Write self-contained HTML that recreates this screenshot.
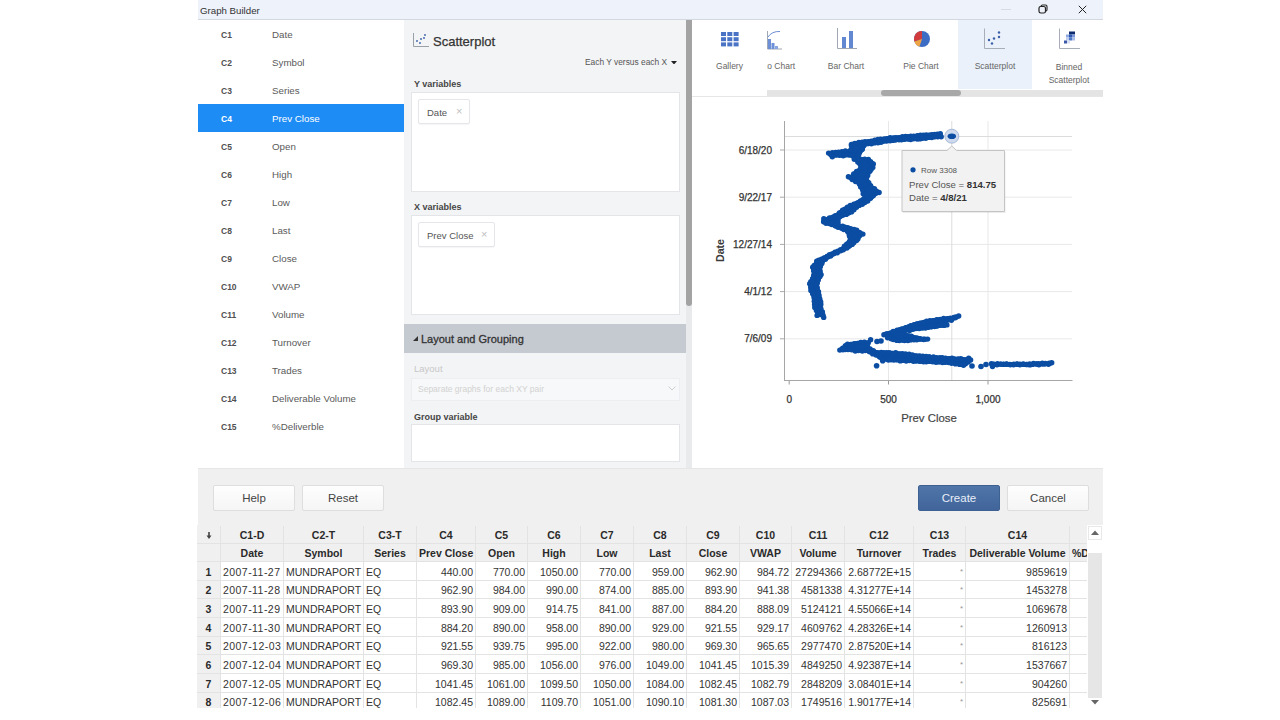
<!DOCTYPE html>
<html><head><meta charset="utf-8"><style>
html,body{margin:0;padding:0;width:1280px;height:720px;overflow:hidden;background:#fff;}
body{font-family:"Liberation Sans",sans-serif;position:relative;color:#333;}
.a{position:absolute;white-space:nowrap;}
#title{left:198px;top:0;width:905px;height:19px;background:#eef2fb;border-bottom:1px solid #d3d8de;}
#cols{left:198px;top:20px;width:206px;height:448px;background:#fff;}
.crow{position:absolute;left:0;width:206px;height:28px;}
.cn{position:absolute;left:23px;top:10px;font-size:8.5px;font-weight:bold;color:#505050;}
.nm{position:absolute;left:74px;top:9px;font-size:9.75px;color:#5a5a5a;}
.sel{background:#1e8cf5;}
.sel .cn,.sel .nm{color:#fff;}
#mid{left:404px;top:20px;width:288px;height:448px;background:#f3f4f6;}
.box{position:absolute;background:#fff;border:1px solid #e3e5e9;box-sizing:border-box;}
.lbl{position:absolute;font-size:9px;font-weight:bold;color:#454545;margin-top:1px;}
.chip{position:absolute;background:#fff;border:1px solid #e4e6ea;border-radius:2px;box-shadow:0 1px 1px rgba(0,0,0,0.04);height:25px;box-sizing:border-box;}
.chip span{position:absolute;top:7px;font-size:9.5px;color:#555;}
.chip i{position:absolute;top:5px;font-style:normal;font-size:11px;color:#c0c0c0;}
#right{left:692px;top:20px;width:411px;height:448px;background:#fff;}
#bottom{left:198px;top:468px;width:905px;height:57px;background:#f0f0f0;box-shadow:inset 0 1px 0 #e6e6e6;}
.btn{position:absolute;height:26px;box-sizing:border-box;background:linear-gradient(#fefefe,#f5f5f5);border:1px solid #dedede;border-radius:2px;font-size:11.5px;color:#444;text-align:center;line-height:24px;}
.btn.pri{background:linear-gradient(#4f75a9,#41659a);border-color:#3d6193;color:#e8eef8;}
.ct{position:absolute;font-size:8.5px;color:#666;text-align:center;margin-top:1px;}
#tbl{left:197px;top:525px;width:906px;height:183px;background:#f0f0f0;overflow:hidden;}
.tc{position:absolute;box-sizing:border-box;border-right:1px solid #e3e3e3;border-bottom:1px solid #e3e3e3;font-size:10.5px;color:#333;overflow:hidden;padding:0 2px;line-height:18px;}
.th{background:#f0f0f0;font-weight:bold;text-align:center;color:#2a2a2a;}
.rh{background:#f0f0f0;font-weight:bold;text-align:center;color:#2a2a2a;}
.num{text-align:right;}
.dt{letter-spacing:0.45px;}
.tc{background:#fff;}
.th,.rh{background:#f0f0f0 !important;}
.dt,.num,.rh,.tx{padding-top:0.5px !important;}
</style></head><body>
<div id="title" class="a"><span class="a" style="left:2px;top:5px;font-size:9.7px;color:#333;">Graph Builder</span><span class="a" style="left:803px;top:9px;width:10px;height:1px;background:#d8dce2;"></span><svg class="a" style="left:840px;top:4px" width="10" height="10" viewBox="0 0 10 10"><rect x="1" y="2.5" width="6.5" height="6.5" rx="1.8" fill="none" stroke="#222" stroke-width="1.2"/><path d="M3 2.2 Q3.2 1 4.5 1 H7.5 Q9 1 9 2.5 V5.5 Q9 7 8 7" fill="none" stroke="#222" stroke-width="1.1"/></svg><svg class="a" style="left:880px;top:5px" width="9" height="9" viewBox="0 0 9 9"><path d="M0.8 0.8 L8.2 8.2 M8.2 0.8 L0.8 8.2" stroke="#222" stroke-width="1"/></svg></div>
<div id="cols" class="a">
<div class="crow" style="top:0px"><span class="cn">C1</span><span class="nm">Date</span></div>
<div class="crow" style="top:28px"><span class="cn">C2</span><span class="nm">Symbol</span></div>
<div class="crow" style="top:56px"><span class="cn">C3</span><span class="nm">Series</span></div>
<div class="crow sel" style="top:84px"><span class="cn">C4</span><span class="nm">Prev Close</span></div>
<div class="crow" style="top:112px"><span class="cn">C5</span><span class="nm">Open</span></div>
<div class="crow" style="top:140px"><span class="cn">C6</span><span class="nm">High</span></div>
<div class="crow" style="top:168px"><span class="cn">C7</span><span class="nm">Low</span></div>
<div class="crow" style="top:196px"><span class="cn">C8</span><span class="nm">Last</span></div>
<div class="crow" style="top:224px"><span class="cn">C9</span><span class="nm">Close</span></div>
<div class="crow" style="top:252px"><span class="cn">C10</span><span class="nm">VWAP</span></div>
<div class="crow" style="top:280px"><span class="cn">C11</span><span class="nm">Volume</span></div>
<div class="crow" style="top:308px"><span class="cn">C12</span><span class="nm">Turnover</span></div>
<div class="crow" style="top:336px"><span class="cn">C13</span><span class="nm">Trades</span></div>
<div class="crow" style="top:364px"><span class="cn">C14</span><span class="nm">Deliverable Volume</span></div>
<div class="crow" style="top:392px"><span class="cn">C15</span><span class="nm">%Deliverble</span></div>
</div>
<div id="mid" class="a">
<svg class="a" style="left:9px;top:13px" width="16" height="14" viewBox="0 0 16 14"><path d="M0.5 0 V13.5 H16" fill="none" stroke="#9aa0a8" stroke-width="1"/><circle cx="4" cy="8" r="0.9" fill="#3a5fa8"/><circle cx="7" cy="10" r="0.9" fill="#3a5fa8"/><circle cx="8" cy="6" r="0.9" fill="#3a5fa8"/><circle cx="11" cy="5" r="0.9" fill="#3a5fa8"/><circle cx="12" cy="2" r="0.9" fill="#3a5fa8"/></svg>
<span class="a" style="left:29px;top:14px;font-size:13px;color:#333;-webkit-text-stroke:0.25px #333;">Scatterplot</span>
<span class="a" style="left:181px;top:37px;font-size:8.4px;color:#555;">Each Y versus each X</span>
<svg class="a" style="left:267px;top:40.5px" width="6" height="3.5" viewBox="0 0 6 3.5"><path d="M0 0 H6 L3 3.5 Z" fill="#222"/></svg>
<span class="lbl" style="left:10px;top:58px;">Y variables</span>
<div class="box" style="left:7px;top:72px;width:269px;height:100px;"></div>
<div class="chip" style="left:14px;top:79px;width:52px;"><span style="left:8px">Date</span><i style="left:37px">×</i></div>
<span class="lbl" style="left:10px;top:181px;">X variables</span>
<div class="box" style="left:7px;top:195px;width:269px;height:100px;"></div>
<div class="chip" style="left:14px;top:202px;width:77px;"><span style="left:8px">Prev Close</span><i style="left:62px">×</i></div>
<div class="a" style="left:0;top:304px;width:282px;height:29px;background:#c5cad1;"></div>
<svg class="a" style="left:9px;top:316px" width="5" height="5" viewBox="0 0 5 5"><path d="M5 0 V5 H0 Z" fill="#333"/></svg>
<span class="a" style="left:17px;top:313px;font-size:11px;color:#333;-webkit-text-stroke:0.3px #333;">Layout and Grouping</span>
<span class="a" style="left:10px;top:343px;font-size:9.5px;color:#c8c8c8;">Layout</span>
<div class="box" style="left:7px;top:358px;width:269px;height:23px;border-color:#eceef1;background:#f7f8f9;"></div>
<span class="a" style="left:14px;top:364px;font-size:8.5px;color:#d2d2d2;">Separate graphs for each XY pair</span>
<svg class="a" style="left:264px;top:366px" width="8" height="5" viewBox="0 0 8 5"><path d="M0.5 0.5 L4 4 L7.5 0.5" fill="none" stroke="#d0d0d0" stroke-width="1"/></svg>
<span class="lbl" style="left:10px;top:391px;">Group variable</span>
<div class="box" style="left:7px;top:404px;width:269px;height:38px;"></div>
<div class="a" style="left:282px;top:0;width:6px;height:448px;background:#e9eaec;"></div>
<div class="a" style="left:282px;top:0;width:6px;height:286px;background:#a3a3a3;border-radius:0 0 3px 3px;"></div>
</div>
<div id="right" class="a">
<div class="a" style="left:0;top:0;width:75px;height:76px;background:#fff;border-right:1px solid #e8e8e8;"></div>
<svg class="a" style="left:29px;top:12px" width="18" height="15" viewBox="0 0 18 15"><rect x="0.0" y="0.0" width="5" height="4" fill="#4a73c6"/><rect x="6.3" y="0.0" width="5" height="4" fill="#4a73c6"/><rect x="12.6" y="0.0" width="5" height="4" fill="#4a73c6"/><rect x="0.0" y="5.2" width="5" height="4" fill="#4a73c6"/><rect x="6.3" y="5.2" width="5" height="4" fill="#4a73c6"/><rect x="12.6" y="5.2" width="5" height="4" fill="#4a73c6"/><rect x="0.0" y="10.4" width="5" height="4" fill="#4a73c6"/><rect x="6.3" y="10.4" width="5" height="4" fill="#4a73c6"/><rect x="12.6" y="10.4" width="5" height="4" fill="#4a73c6"/></svg>
<span class="ct" style="left:0;top:40px;width:75px;">Gallery</span>
<div class="a" style="left:75px;top:0;width:336px;height:70px;background:#fff;overflow:hidden;">
<div class="a" style="left:191px;top:0;width:74px;height:69px;background:#eaf1fb;"></div>
<svg class="a" style="left:0px;top:10px" width="18" height="20" viewBox="0 0 18 20"><path d="M0.5 1 V19 H15" fill="none" stroke="#a0a8b4" stroke-width="1"/><rect x="1" y="9" width="3" height="10" fill="#6d8fd6"/><rect x="4.5" y="13" width="3" height="6" fill="#6d8fd6"/><rect x="8" y="16" width="3" height="3" fill="#8aa6e0"/><path d="M1 7 Q5 1 13 1.5" fill="none" stroke="#6d8fd6" stroke-width="1"/></svg>
<span class="ct" style="left:-33px;top:40px;width:74px;">Pareto Chart</span>
<svg class="a" style="left:70px;top:8px" width="22" height="22" viewBox="0 0 22 22"><path d="M0.5 0 V20.5 H20" fill="none" stroke="#a0a8b4" stroke-width="1"/><rect x="5" y="9" width="4" height="11" fill="#6388d2"/><rect x="12" y="3" width="4" height="17" fill="#6388d2"/></svg>
<span class="ct" style="left:42px;top:40px;width:74px;">Bar Chart</span>
<svg class="a" style="left:146px;top:10px" width="18" height="18" viewBox="-9 -9 18 18"><circle r="8" fill="#3d6cc4"/><path d="M0 0 V-8 A8 8 0 0 0 -7.6 2.4 Z" fill="#d23b3b"/><path d="M0 0 L-7.6 2.4 A8 8 0 0 0 -2.5 7.6 Z" fill="#f0a544"/></svg>
<span class="ct" style="left:117px;top:40px;width:74px;">Pie Chart</span>
<svg class="a" style="left:217px;top:8px" width="22" height="22" viewBox="0 0 22 22"><path d="M0.5 0.5 V20.5 H21" fill="none" stroke="#a8aeb8" stroke-width="1"/><circle cx="5" cy="12" r="1.2" fill="#3a5fa8"/><circle cx="8" cy="15.5" r="1.2" fill="#3a5fa8"/><circle cx="10" cy="10.5" r="1.2" fill="#3a5fa8"/><circle cx="15" cy="9" r="1.2" fill="#3a5fa8"/><circle cx="15" cy="4.5" r="1.2" fill="#3a5fa8"/></svg>
<span class="ct" style="left:191px;top:40px;width:74px;">Scatterplot</span>
<svg class="a" style="left:292px;top:8px" width="22" height="22" viewBox="0 0 22 22"><path d="M0.5 0.5 V20.5 H21" fill="none" stroke="#a8aeb8" stroke-width="1"/><rect x="10" y="3.5" width="3" height="3" fill="#0d2a6e"/><rect x="13" y="3.5" width="3" height="3" fill="#0d2a6e"/><rect x="7" y="6.5" width="3" height="3" fill="#8fa8e0"/><rect x="10" y="6.5" width="3" height="3" fill="#2d58b0"/><rect x="13" y="6.5" width="3" height="3" fill="#7c98d8"/><rect x="7" y="9.5" width="3" height="3" fill="#c0cff0"/><rect x="10" y="9.5" width="3" height="3" fill="#4d75c8"/><rect x="13" y="9.5" width="3" height="3" fill="#a8bce8"/><rect x="5" y="12.5" width="3" height="3" fill="#3958a8"/><rect x="8" y="12.5" width="3" height="3" fill="#d8e0f4"/></svg>
<div class="ct" style="left:265px;top:40px;width:74px;line-height:13px;">Binned<br>Scatterplot</div>
</div>
<div class="a" style="left:75px;top:70px;width:336px;height:6px;background:#e4e4e4;"></div>
<div class="a" style="left:189px;top:70px;width:80px;height:6px;background:#a8a8a8;border-radius:3px;"></div>
<div class="a" style="left:0;top:76px;width:411px;height:1px;background:#e6e6e6;"></div>
</div>
<svg class="a" style="left:692px;top:97px" width="411" height="371" viewBox="692 97 411 371" font-family="Liberation Sans"><line x1="784" y1="150.0" x2="1072" y2="150.0" stroke="#e8e8e8" stroke-width="1"/><line x1="780" y1="150.0" x2="784" y2="150.0" stroke="#aaa" stroke-width="1"/><text x="772" y="153.6" text-anchor="end" font-size="10" fill="#333" stroke="#333" stroke-width="0.25">6/18/20</text><line x1="784" y1="197.2" x2="1072" y2="197.2" stroke="#e8e8e8" stroke-width="1"/><line x1="780" y1="197.2" x2="784" y2="197.2" stroke="#aaa" stroke-width="1"/><text x="772" y="200.8" text-anchor="end" font-size="10" fill="#333" stroke="#333" stroke-width="0.25">9/22/17</text><line x1="784" y1="244.4" x2="1072" y2="244.4" stroke="#e8e8e8" stroke-width="1"/><line x1="780" y1="244.4" x2="784" y2="244.4" stroke="#aaa" stroke-width="1"/><text x="772" y="248.0" text-anchor="end" font-size="10" fill="#333" stroke="#333" stroke-width="0.25">12/27/14</text><line x1="784" y1="291.6" x2="1072" y2="291.6" stroke="#e8e8e8" stroke-width="1"/><line x1="780" y1="291.6" x2="784" y2="291.6" stroke="#aaa" stroke-width="1"/><text x="772" y="295.2" text-anchor="end" font-size="10" fill="#333" stroke="#333" stroke-width="0.25">4/1/12</text><line x1="784" y1="338.8" x2="1072" y2="338.8" stroke="#e8e8e8" stroke-width="1"/><line x1="780" y1="338.8" x2="784" y2="338.8" stroke="#aaa" stroke-width="1"/><text x="772" y="342.4" text-anchor="end" font-size="10" fill="#333" stroke="#333" stroke-width="0.25">7/6/09</text><line x1="789.2" y1="380" x2="789.2" y2="384.5" stroke="#999" stroke-width="1"/><text x="789.2" y="402.6" text-anchor="middle" font-size="10" fill="#333" stroke="#333" stroke-width="0.25">0</text><line x1="888.5" y1="121" x2="888.5" y2="380" stroke="#e8e8e8" stroke-width="1"/><line x1="888.5" y1="380" x2="888.5" y2="384.5" stroke="#999" stroke-width="1"/><text x="888.5" y="402.6" text-anchor="middle" font-size="10" fill="#333" stroke="#333" stroke-width="0.25">500</text><line x1="988" y1="121" x2="988" y2="380" stroke="#e8e8e8" stroke-width="1"/><line x1="988" y1="380" x2="988" y2="384.5" stroke="#999" stroke-width="1"/><text x="988" y="402.6" text-anchor="middle" font-size="10" fill="#333" stroke="#333" stroke-width="0.25">1,000</text><line x1="784" y1="136.5" x2="1072" y2="136.5" stroke="#dcdcdc" stroke-width="1"/><line x1="951.8" y1="121" x2="951.8" y2="380" stroke="#dcdcdc" stroke-width="1"/><line x1="784.5" y1="121" x2="784.5" y2="380.5" stroke="#a6a6a6" stroke-width="1"/><line x1="784" y1="380.5" x2="1072.5" y2="380.5" stroke="#a6a6a6" stroke-width="1"/><text x="929" y="421.5" text-anchor="middle" font-size="11.4" fill="#444" stroke="#444" stroke-width="0.2">Prev Close</text><text transform="translate(724.4,250.5) rotate(-90)" text-anchor="middle" font-size="10.6" font-weight="bold" fill="#3a3a3a">Date</text><polygon points="828.5,151.5 849.0,149.0 851.0,142.0 865.0,140.0 890.0,136.0 920.0,133.5 938.0,132.0 942.0,134.0 941.5,138.5 920.0,140.5 890.0,142.5 866.0,146.5 864.0,151.0 859.0,157.0 830.0,157.5" fill="#0a4da2"/><circle cx="828.6" cy="153.1" r="2.7" fill="#0a4da2"/><circle cx="832.3" cy="152.6" r="2.7" fill="#0a4da2"/><circle cx="835.6" cy="152.5" r="2.7" fill="#0a4da2"/><circle cx="838.6" cy="152.2" r="2.7" fill="#0a4da2"/><circle cx="841.9" cy="151.8" r="2.7" fill="#0a4da2"/><circle cx="845.4" cy="151.0" r="2.7" fill="#0a4da2"/><circle cx="850.8" cy="149.9" r="2.7" fill="#0a4da2"/><circle cx="851.5" cy="145.8" r="2.7" fill="#0a4da2"/><circle cx="851.4" cy="144.4" r="2.7" fill="#0a4da2"/><circle cx="854.9" cy="143.4" r="2.7" fill="#0a4da2"/><circle cx="858.8" cy="142.5" r="2.7" fill="#0a4da2"/><circle cx="862.1" cy="142.3" r="2.7" fill="#0a4da2"/><circle cx="865.0" cy="141.6" r="2.7" fill="#0a4da2"/><circle cx="868.2" cy="141.8" r="2.7" fill="#0a4da2"/><circle cx="871.2" cy="141.1" r="2.7" fill="#0a4da2"/><circle cx="874.8" cy="140.3" r="2.7" fill="#0a4da2"/><circle cx="877.9" cy="139.5" r="2.7" fill="#0a4da2"/><circle cx="880.5" cy="139.2" r="2.7" fill="#0a4da2"/><circle cx="884.2" cy="138.9" r="2.7" fill="#0a4da2"/><circle cx="887.0" cy="138.6" r="2.7" fill="#0a4da2"/><circle cx="890.1" cy="137.8" r="2.7" fill="#0a4da2"/><circle cx="893.5" cy="137.9" r="2.7" fill="#0a4da2"/><circle cx="895.9" cy="137.6" r="2.7" fill="#0a4da2"/><circle cx="899.2" cy="137.6" r="2.7" fill="#0a4da2"/><circle cx="902.4" cy="136.8" r="2.7" fill="#0a4da2"/><circle cx="905.6" cy="136.4" r="2.7" fill="#0a4da2"/><circle cx="908.1" cy="136.8" r="2.7" fill="#0a4da2"/><circle cx="910.8" cy="136.2" r="2.7" fill="#0a4da2"/><circle cx="913.7" cy="136.2" r="2.7" fill="#0a4da2"/><circle cx="917.4" cy="135.8" r="2.7" fill="#0a4da2"/><circle cx="920.5" cy="135.3" r="2.7" fill="#0a4da2"/><circle cx="923.4" cy="135.3" r="2.7" fill="#0a4da2"/><circle cx="926.2" cy="134.9" r="2.7" fill="#0a4da2"/><circle cx="929.5" cy="135.2" r="2.7" fill="#0a4da2"/><circle cx="932.1" cy="134.7" r="2.7" fill="#0a4da2"/><circle cx="934.7" cy="134.4" r="2.7" fill="#0a4da2"/><circle cx="937.3" cy="134.3" r="2.7" fill="#0a4da2"/><circle cx="940.3" cy="133.6" r="2.7" fill="#0a4da2"/><circle cx="941.2" cy="136.7" r="2.7" fill="#0a4da2"/><circle cx="937.8" cy="136.8" r="2.7" fill="#0a4da2"/><circle cx="934.8" cy="136.7" r="2.7" fill="#0a4da2"/><circle cx="931.7" cy="137.6" r="2.7" fill="#0a4da2"/><circle cx="928.7" cy="137.4" r="2.7" fill="#0a4da2"/><circle cx="925.8" cy="138.3" r="2.7" fill="#0a4da2"/><circle cx="922.5" cy="138.2" r="2.7" fill="#0a4da2"/><circle cx="919.9" cy="138.9" r="2.7" fill="#0a4da2"/><circle cx="917.2" cy="139.1" r="2.7" fill="#0a4da2"/><circle cx="913.6" cy="138.8" r="2.7" fill="#0a4da2"/><circle cx="910.7" cy="139.5" r="2.7" fill="#0a4da2"/><circle cx="908.3" cy="139.0" r="2.7" fill="#0a4da2"/><circle cx="904.5" cy="139.2" r="2.7" fill="#0a4da2"/><circle cx="901.6" cy="139.7" r="2.7" fill="#0a4da2"/><circle cx="899.0" cy="139.7" r="2.7" fill="#0a4da2"/><circle cx="895.4" cy="140.0" r="2.7" fill="#0a4da2"/><circle cx="892.7" cy="140.4" r="2.7" fill="#0a4da2"/><circle cx="890.1" cy="140.7" r="2.7" fill="#0a4da2"/><circle cx="886.7" cy="141.1" r="2.7" fill="#0a4da2"/><circle cx="883.8" cy="141.1" r="2.7" fill="#0a4da2"/><circle cx="881.1" cy="142.3" r="2.7" fill="#0a4da2"/><circle cx="878.0" cy="142.8" r="2.7" fill="#0a4da2"/><circle cx="874.6" cy="142.9" r="2.7" fill="#0a4da2"/><circle cx="871.3" cy="143.7" r="2.7" fill="#0a4da2"/><circle cx="868.2" cy="143.6" r="2.7" fill="#0a4da2"/><circle cx="863.9" cy="145.4" r="2.7" fill="#0a4da2"/><circle cx="862.3" cy="149.3" r="2.7" fill="#0a4da2"/><circle cx="859.5" cy="152.4" r="2.7" fill="#0a4da2"/><circle cx="858.6" cy="154.9" r="2.7" fill="#0a4da2"/><circle cx="855.3" cy="155.4" r="2.7" fill="#0a4da2"/><circle cx="852.6" cy="154.8" r="2.7" fill="#0a4da2"/><circle cx="849.1" cy="155.0" r="2.7" fill="#0a4da2"/><circle cx="845.9" cy="154.8" r="2.7" fill="#0a4da2"/><circle cx="843.2" cy="155.8" r="2.7" fill="#0a4da2"/><circle cx="839.6" cy="155.3" r="2.7" fill="#0a4da2"/><circle cx="836.0" cy="155.0" r="2.7" fill="#0a4da2"/><circle cx="833.0" cy="155.2" r="2.7" fill="#0a4da2"/><circle cx="832.3" cy="156.7" r="2.7" fill="#0a4da2"/><circle cx="830.7" cy="154.5" r="2.7" fill="#0a4da2"/><polygon points="851.0,157.5 856.0,162.5 858.7,167.5 852.5,172.5 847.5,178.7 857.5,185.0 861.0,191.2 862.5,197.5 852.5,202.5 841.0,208.7 835.0,213.7 822.0,218.7 822.5,223.7 837.5,228.7 846.0,232.5 848.0,239.7 840.0,248.0 826.0,254.3 815.0,260.6 811.0,267.5 812.0,274.4 808.0,284.2 809.0,291.1 812.0,298.0 813.0,307.8 817.0,317.0 826.0,317.0 823.0,307.8 822.0,298.0 820.0,291.1 819.0,284.2 823.0,274.4 822.0,267.5 826.0,260.6 838.0,254.3 851.0,248.0 860.0,239.7 864.0,232.5 857.5,228.7 840.0,223.7 841.0,218.7 852.5,213.7 857.5,208.7 868.7,202.5 875.0,197.5 880.6,191.2 872.5,185.0 868.7,178.7 871.0,172.5 875.0,167.5 875.0,162.5 868.7,157.5" fill="#0a4da2"/><circle cx="852.4" cy="155.7" r="2.7" fill="#0a4da2"/><circle cx="855.0" cy="158.1" r="2.7" fill="#0a4da2"/><circle cx="857.8" cy="162.0" r="2.7" fill="#0a4da2"/><circle cx="860.3" cy="169.3" r="2.7" fill="#0a4da2"/><circle cx="856.6" cy="171.4" r="2.7" fill="#0a4da2"/><circle cx="853.7" cy="174.0" r="2.7" fill="#0a4da2"/><circle cx="851.6" cy="177.1" r="2.7" fill="#0a4da2"/><circle cx="848.4" cy="176.7" r="2.7" fill="#0a4da2"/><circle cx="852.2" cy="179.6" r="2.7" fill="#0a4da2"/><circle cx="855.6" cy="181.5" r="2.7" fill="#0a4da2"/><circle cx="859.6" cy="184.3" r="2.7" fill="#0a4da2"/><circle cx="860.7" cy="187.1" r="2.7" fill="#0a4da2"/><circle cx="862.8" cy="190.3" r="2.7" fill="#0a4da2"/><circle cx="863.2" cy="193.7" r="2.7" fill="#0a4da2"/><circle cx="863.2" cy="199.5" r="2.7" fill="#0a4da2"/><circle cx="860.5" cy="200.9" r="2.7" fill="#0a4da2"/><circle cx="857.2" cy="203.1" r="2.7" fill="#0a4da2"/><circle cx="853.9" cy="204.1" r="2.7" fill="#0a4da2"/><circle cx="850.3" cy="205.5" r="2.7" fill="#0a4da2"/><circle cx="847.4" cy="207.1" r="2.7" fill="#0a4da2"/><circle cx="844.9" cy="209.3" r="2.7" fill="#0a4da2"/><circle cx="842.6" cy="210.2" r="2.7" fill="#0a4da2"/><circle cx="839.4" cy="213.0" r="2.7" fill="#0a4da2"/><circle cx="835.3" cy="215.7" r="2.7" fill="#0a4da2"/><circle cx="832.9" cy="217.1" r="2.7" fill="#0a4da2"/><circle cx="829.5" cy="218.0" r="2.7" fill="#0a4da2"/><circle cx="825.6" cy="219.6" r="2.7" fill="#0a4da2"/><circle cx="823.8" cy="218.8" r="2.7" fill="#0a4da2"/><circle cx="823.6" cy="221.7" r="2.7" fill="#0a4da2"/><circle cx="826.0" cy="223.2" r="2.7" fill="#0a4da2"/><circle cx="829.4" cy="223.5" r="2.7" fill="#0a4da2"/><circle cx="831.8" cy="224.5" r="2.7" fill="#0a4da2"/><circle cx="835.5" cy="226.1" r="2.7" fill="#0a4da2"/><circle cx="838.0" cy="227.2" r="2.7" fill="#0a4da2"/><circle cx="841.6" cy="228.3" r="2.7" fill="#0a4da2"/><circle cx="843.8" cy="229.5" r="2.7" fill="#0a4da2"/><circle cx="847.6" cy="231.5" r="2.7" fill="#0a4da2"/><circle cx="849.4" cy="235.7" r="2.7" fill="#0a4da2"/><circle cx="849.5" cy="241.5" r="2.7" fill="#0a4da2"/><circle cx="846.7" cy="244.2" r="2.7" fill="#0a4da2"/><circle cx="844.4" cy="246.3" r="2.7" fill="#0a4da2"/><circle cx="840.6" cy="249.6" r="2.7" fill="#0a4da2"/><circle cx="837.8" cy="251.2" r="2.7" fill="#0a4da2"/><circle cx="835.0" cy="252.3" r="2.7" fill="#0a4da2"/><circle cx="832.1" cy="254.0" r="2.7" fill="#0a4da2"/><circle cx="829.5" cy="254.8" r="2.7" fill="#0a4da2"/><circle cx="827.1" cy="256.4" r="2.7" fill="#0a4da2"/><circle cx="824.2" cy="258.0" r="2.7" fill="#0a4da2"/><circle cx="821.5" cy="259.2" r="2.7" fill="#0a4da2"/><circle cx="818.8" cy="260.3" r="2.7" fill="#0a4da2"/><circle cx="816.7" cy="261.3" r="2.7" fill="#0a4da2"/><circle cx="814.2" cy="265.4" r="2.7" fill="#0a4da2"/><circle cx="812.7" cy="267.2" r="2.7" fill="#0a4da2"/><circle cx="813.7" cy="270.7" r="2.7" fill="#0a4da2"/><circle cx="813.7" cy="275.2" r="2.7" fill="#0a4da2"/><circle cx="812.6" cy="278.7" r="2.7" fill="#0a4da2"/><circle cx="810.8" cy="281.7" r="2.7" fill="#0a4da2"/><circle cx="809.7" cy="283.7" r="2.7" fill="#0a4da2"/><circle cx="810.8" cy="287.4" r="2.7" fill="#0a4da2"/><circle cx="810.9" cy="290.6" r="2.7" fill="#0a4da2"/><circle cx="812.7" cy="293.7" r="2.7" fill="#0a4da2"/><circle cx="814.1" cy="297.8" r="2.7" fill="#0a4da2"/><circle cx="814.3" cy="301.3" r="2.7" fill="#0a4da2"/><circle cx="814.6" cy="304.4" r="2.7" fill="#0a4da2"/><circle cx="814.8" cy="307.4" r="2.7" fill="#0a4da2"/><circle cx="816.4" cy="310.4" r="2.7" fill="#0a4da2"/><circle cx="817.9" cy="312.9" r="2.7" fill="#0a4da2"/><circle cx="817.1" cy="315.4" r="2.7" fill="#0a4da2"/><circle cx="820.3" cy="314.6" r="2.7" fill="#0a4da2"/><circle cx="822.6" cy="314.9" r="2.7" fill="#0a4da2"/><circle cx="823.7" cy="317.4" r="2.7" fill="#0a4da2"/><circle cx="822.7" cy="314.7" r="2.7" fill="#0a4da2"/><circle cx="822.4" cy="311.9" r="2.7" fill="#0a4da2"/><circle cx="820.7" cy="308.2" r="2.7" fill="#0a4da2"/><circle cx="820.8" cy="304.4" r="2.7" fill="#0a4da2"/><circle cx="820.7" cy="301.9" r="2.7" fill="#0a4da2"/><circle cx="819.8" cy="299.0" r="2.7" fill="#0a4da2"/><circle cx="819.0" cy="295.1" r="2.7" fill="#0a4da2"/><circle cx="818.5" cy="291.7" r="2.7" fill="#0a4da2"/><circle cx="817.2" cy="287.9" r="2.7" fill="#0a4da2"/><circle cx="817.2" cy="283.3" r="2.7" fill="#0a4da2"/><circle cx="818.2" cy="280.0" r="2.7" fill="#0a4da2"/><circle cx="820.0" cy="276.4" r="2.7" fill="#0a4da2"/><circle cx="821.1" cy="274.6" r="2.7" fill="#0a4da2"/><circle cx="820.0" cy="271.1" r="2.7" fill="#0a4da2"/><circle cx="820.4" cy="266.5" r="2.7" fill="#0a4da2"/><circle cx="821.8" cy="263.5" r="2.7" fill="#0a4da2"/><circle cx="825.4" cy="259.3" r="2.7" fill="#0a4da2"/><circle cx="827.7" cy="257.0" r="2.7" fill="#0a4da2"/><circle cx="830.6" cy="256.0" r="2.7" fill="#0a4da2"/><circle cx="833.8" cy="253.7" r="2.7" fill="#0a4da2"/><circle cx="837.1" cy="252.9" r="2.7" fill="#0a4da2"/><circle cx="840.7" cy="250.7" r="2.7" fill="#0a4da2"/><circle cx="843.3" cy="249.8" r="2.7" fill="#0a4da2"/><circle cx="846.9" cy="248.0" r="2.7" fill="#0a4da2"/><circle cx="849.2" cy="246.1" r="2.7" fill="#0a4da2"/><circle cx="852.1" cy="244.4" r="2.7" fill="#0a4da2"/><circle cx="853.7" cy="242.8" r="2.7" fill="#0a4da2"/><circle cx="856.5" cy="240.6" r="2.7" fill="#0a4da2"/><circle cx="857.8" cy="239.1" r="2.7" fill="#0a4da2"/><circle cx="859.8" cy="235.5" r="2.7" fill="#0a4da2"/><circle cx="862.9" cy="234.1" r="2.7" fill="#0a4da2"/><circle cx="859.8" cy="232.8" r="2.7" fill="#0a4da2"/><circle cx="856.7" cy="230.3" r="2.7" fill="#0a4da2"/><circle cx="854.1" cy="229.5" r="2.7" fill="#0a4da2"/><circle cx="850.7" cy="228.6" r="2.7" fill="#0a4da2"/><circle cx="847.8" cy="227.8" r="2.7" fill="#0a4da2"/><circle cx="845.1" cy="227.1" r="2.7" fill="#0a4da2"/><circle cx="842.6" cy="226.2" r="2.7" fill="#0a4da2"/><circle cx="838.0" cy="223.0" r="2.7" fill="#0a4da2"/><circle cx="840.0" cy="216.4" r="2.7" fill="#0a4da2"/><circle cx="842.8" cy="215.1" r="2.7" fill="#0a4da2"/><circle cx="846.2" cy="214.4" r="2.7" fill="#0a4da2"/><circle cx="848.5" cy="213.1" r="2.7" fill="#0a4da2"/><circle cx="851.5" cy="211.9" r="2.7" fill="#0a4da2"/><circle cx="853.9" cy="209.7" r="2.7" fill="#0a4da2"/><circle cx="856.5" cy="207.3" r="2.7" fill="#0a4da2"/><circle cx="859.2" cy="205.4" r="2.7" fill="#0a4da2"/><circle cx="862.3" cy="204.3" r="2.7" fill="#0a4da2"/><circle cx="864.8" cy="202.6" r="2.7" fill="#0a4da2"/><circle cx="867.7" cy="201.1" r="2.7" fill="#0a4da2"/><circle cx="870.5" cy="198.3" r="2.7" fill="#0a4da2"/><circle cx="873.1" cy="195.8" r="2.7" fill="#0a4da2"/><circle cx="875.9" cy="193.3" r="2.7" fill="#0a4da2"/><circle cx="879.1" cy="192.5" r="2.7" fill="#0a4da2"/><circle cx="876.3" cy="191.1" r="2.7" fill="#0a4da2"/><circle cx="874.4" cy="188.8" r="2.7" fill="#0a4da2"/><circle cx="870.6" cy="185.8" r="2.7" fill="#0a4da2"/><circle cx="868.7" cy="182.8" r="2.7" fill="#0a4da2"/><circle cx="866.5" cy="178.0" r="2.7" fill="#0a4da2"/><circle cx="867.7" cy="175.4" r="2.7" fill="#0a4da2"/><circle cx="869.9" cy="171.3" r="2.7" fill="#0a4da2"/><circle cx="871.2" cy="169.2" r="2.7" fill="#0a4da2"/><circle cx="872.8" cy="167.4" r="2.7" fill="#0a4da2"/><circle cx="873.3" cy="163.9" r="2.7" fill="#0a4da2"/><circle cx="870.6" cy="161.6" r="2.7" fill="#0a4da2"/><circle cx="868.4" cy="159.5" r="2.7" fill="#0a4da2"/><circle cx="864.7" cy="159.3" r="2.7" fill="#0a4da2"/><circle cx="861.2" cy="159.4" r="2.7" fill="#0a4da2"/><circle cx="857.6" cy="159.0" r="2.7" fill="#0a4da2"/><circle cx="854.3" cy="159.2" r="2.7" fill="#0a4da2"/><polygon points="883.2,332.8 895.9,328.8 916.3,321.6 936.6,317.6 956.9,315.6 959.9,318.1 951.8,321.6 946.7,323.2 947.2,326.7 931.5,329.3 916.3,330.8 906.1,332.8 926.4,338.4 927.4,340.9 914.2,342.0 895.9,342.5 889.8,340.4 885.8,338.4 884.8,335.4" fill="#0a4da2"/><circle cx="883.9" cy="334.7" r="2.7" fill="#0a4da2"/><circle cx="887.2" cy="333.9" r="2.7" fill="#0a4da2"/><circle cx="890.4" cy="333.1" r="2.7" fill="#0a4da2"/><circle cx="893.2" cy="331.5" r="2.7" fill="#0a4da2"/><circle cx="897.1" cy="330.3" r="2.7" fill="#0a4da2"/><circle cx="899.7" cy="329.8" r="2.7" fill="#0a4da2"/><circle cx="901.9" cy="329.0" r="2.7" fill="#0a4da2"/><circle cx="905.7" cy="327.7" r="2.7" fill="#0a4da2"/><circle cx="908.5" cy="326.9" r="2.7" fill="#0a4da2"/><circle cx="910.8" cy="325.6" r="2.7" fill="#0a4da2"/><circle cx="914.1" cy="324.8" r="2.7" fill="#0a4da2"/><circle cx="917.0" cy="323.9" r="2.7" fill="#0a4da2"/><circle cx="920.2" cy="323.3" r="2.7" fill="#0a4da2"/><circle cx="923.6" cy="322.4" r="2.7" fill="#0a4da2"/><circle cx="926.6" cy="321.1" r="2.7" fill="#0a4da2"/><circle cx="929.9" cy="320.8" r="2.7" fill="#0a4da2"/><circle cx="933.2" cy="320.6" r="2.7" fill="#0a4da2"/><circle cx="936.9" cy="319.7" r="2.7" fill="#0a4da2"/><circle cx="940.3" cy="319.4" r="2.7" fill="#0a4da2"/><circle cx="943.6" cy="318.4" r="2.7" fill="#0a4da2"/><circle cx="947.2" cy="318.8" r="2.7" fill="#0a4da2"/><circle cx="950.3" cy="318.3" r="2.7" fill="#0a4da2"/><circle cx="953.9" cy="317.5" r="2.7" fill="#0a4da2"/><circle cx="955.9" cy="316.9" r="2.7" fill="#0a4da2"/><circle cx="958.7" cy="316.0" r="2.7" fill="#0a4da2"/><circle cx="955.3" cy="317.7" r="2.7" fill="#0a4da2"/><circle cx="951.4" cy="320.2" r="2.7" fill="#0a4da2"/><circle cx="944.7" cy="323.4" r="2.7" fill="#0a4da2"/><circle cx="946.9" cy="324.9" r="2.7" fill="#0a4da2"/><circle cx="944.0" cy="325.4" r="2.7" fill="#0a4da2"/><circle cx="940.7" cy="325.3" r="2.7" fill="#0a4da2"/><circle cx="937.1" cy="326.0" r="2.7" fill="#0a4da2"/><circle cx="934.6" cy="326.6" r="2.7" fill="#0a4da2"/><circle cx="931.4" cy="326.8" r="2.7" fill="#0a4da2"/><circle cx="927.8" cy="327.4" r="2.7" fill="#0a4da2"/><circle cx="925.4" cy="328.1" r="2.7" fill="#0a4da2"/><circle cx="922.4" cy="328.0" r="2.7" fill="#0a4da2"/><circle cx="919.2" cy="328.5" r="2.7" fill="#0a4da2"/><circle cx="915.9" cy="328.5" r="2.7" fill="#0a4da2"/><circle cx="912.9" cy="329.2" r="2.7" fill="#0a4da2"/><circle cx="909.6" cy="330.6" r="2.7" fill="#0a4da2"/><circle cx="905.1" cy="334.7" r="2.7" fill="#0a4da2"/><circle cx="908.8" cy="336.0" r="2.7" fill="#0a4da2"/><circle cx="911.3" cy="336.1" r="2.7" fill="#0a4da2"/><circle cx="914.0" cy="337.6" r="2.7" fill="#0a4da2"/><circle cx="916.9" cy="338.0" r="2.7" fill="#0a4da2"/><circle cx="919.7" cy="338.8" r="2.7" fill="#0a4da2"/><circle cx="923.4" cy="339.2" r="2.7" fill="#0a4da2"/><circle cx="924.9" cy="339.2" r="2.7" fill="#0a4da2"/><circle cx="927.6" cy="339.1" r="2.7" fill="#0a4da2"/><circle cx="923.7" cy="339.6" r="2.7" fill="#0a4da2"/><circle cx="920.6" cy="339.0" r="2.7" fill="#0a4da2"/><circle cx="916.8" cy="339.7" r="2.7" fill="#0a4da2"/><circle cx="914.1" cy="339.8" r="2.7" fill="#0a4da2"/><circle cx="910.7" cy="339.9" r="2.7" fill="#0a4da2"/><circle cx="907.9" cy="340.5" r="2.7" fill="#0a4da2"/><circle cx="904.5" cy="340.5" r="2.7" fill="#0a4da2"/><circle cx="902.3" cy="340.0" r="2.7" fill="#0a4da2"/><circle cx="899.3" cy="340.6" r="2.7" fill="#0a4da2"/><circle cx="897.0" cy="340.4" r="2.7" fill="#0a4da2"/><circle cx="893.4" cy="339.5" r="2.7" fill="#0a4da2"/><circle cx="891.2" cy="338.7" r="2.7" fill="#0a4da2"/><circle cx="887.6" cy="337.7" r="2.7" fill="#0a4da2"/><circle cx="886.3" cy="333.9" r="2.7" fill="#0a4da2"/><polygon points="839.1,348.1 847.2,342.5 860.4,340.5 872.0,340.8 869.5,344.5 870.5,347.5 877.7,350.6 895.9,351.1 916.3,353.6 936.6,355.7 970.0,357.6 972.0,362.0 963.0,367.0 951.8,364.8 926.4,363.8 906.1,362.8 887.8,361.8 880.7,360.8 875.6,356.7 865.5,352.6 855.3,352.6 841.1,350.6" fill="#0a4da2"/><circle cx="839.8" cy="350.1" r="2.7" fill="#0a4da2"/><circle cx="842.7" cy="348.3" r="2.7" fill="#0a4da2"/><circle cx="845.4" cy="345.8" r="2.7" fill="#0a4da2"/><circle cx="847.5" cy="344.2" r="2.7" fill="#0a4da2"/><circle cx="850.7" cy="344.4" r="2.7" fill="#0a4da2"/><circle cx="854.5" cy="343.8" r="2.7" fill="#0a4da2"/><circle cx="857.5" cy="343.4" r="2.7" fill="#0a4da2"/><circle cx="860.8" cy="342.5" r="2.7" fill="#0a4da2"/><circle cx="864.4" cy="342.1" r="2.7" fill="#0a4da2"/><circle cx="868.3" cy="342.7" r="2.7" fill="#0a4da2"/><circle cx="870.6" cy="339.8" r="2.7" fill="#0a4da2"/><circle cx="867.4" cy="344.7" r="2.7" fill="#0a4da2"/><circle cx="870.1" cy="349.0" r="2.7" fill="#0a4da2"/><circle cx="873.3" cy="350.7" r="2.7" fill="#0a4da2"/><circle cx="877.4" cy="352.8" r="2.7" fill="#0a4da2"/><circle cx="881.2" cy="352.4" r="2.7" fill="#0a4da2"/><circle cx="883.9" cy="352.6" r="2.7" fill="#0a4da2"/><circle cx="886.8" cy="352.7" r="2.7" fill="#0a4da2"/><circle cx="889.4" cy="352.6" r="2.7" fill="#0a4da2"/><circle cx="892.5" cy="353.4" r="2.7" fill="#0a4da2"/><circle cx="895.7" cy="352.8" r="2.7" fill="#0a4da2"/><circle cx="899.5" cy="354.0" r="2.7" fill="#0a4da2"/><circle cx="902.4" cy="353.6" r="2.7" fill="#0a4da2"/><circle cx="905.5" cy="353.9" r="2.7" fill="#0a4da2"/><circle cx="909.1" cy="354.3" r="2.7" fill="#0a4da2"/><circle cx="912.4" cy="354.9" r="2.7" fill="#0a4da2"/><circle cx="916.2" cy="356.0" r="2.7" fill="#0a4da2"/><circle cx="919.7" cy="355.9" r="2.7" fill="#0a4da2"/><circle cx="922.8" cy="356.3" r="2.7" fill="#0a4da2"/><circle cx="926.1" cy="356.5" r="2.7" fill="#0a4da2"/><circle cx="929.2" cy="356.8" r="2.7" fill="#0a4da2"/><circle cx="933.5" cy="357.0" r="2.7" fill="#0a4da2"/><circle cx="936.5" cy="357.8" r="2.7" fill="#0a4da2"/><circle cx="939.9" cy="357.6" r="2.7" fill="#0a4da2"/><circle cx="942.3" cy="357.8" r="2.7" fill="#0a4da2"/><circle cx="945.5" cy="358.2" r="2.7" fill="#0a4da2"/><circle cx="949.1" cy="358.7" r="2.7" fill="#0a4da2"/><circle cx="952.0" cy="358.1" r="2.7" fill="#0a4da2"/><circle cx="954.2" cy="358.9" r="2.7" fill="#0a4da2"/><circle cx="958.1" cy="358.9" r="2.7" fill="#0a4da2"/><circle cx="960.9" cy="358.6" r="2.7" fill="#0a4da2"/><circle cx="963.7" cy="359.7" r="2.7" fill="#0a4da2"/><circle cx="967.2" cy="359.8" r="2.7" fill="#0a4da2"/><circle cx="968.7" cy="358.2" r="2.7" fill="#0a4da2"/><circle cx="970.6" cy="359.9" r="2.7" fill="#0a4da2"/><circle cx="968.1" cy="362.1" r="2.7" fill="#0a4da2"/><circle cx="965.5" cy="363.8" r="2.7" fill="#0a4da2"/><circle cx="963.5" cy="365.3" r="2.7" fill="#0a4da2"/><circle cx="959.6" cy="364.4" r="2.7" fill="#0a4da2"/><circle cx="955.5" cy="363.9" r="2.7" fill="#0a4da2"/><circle cx="951.6" cy="363.2" r="2.7" fill="#0a4da2"/><circle cx="948.8" cy="362.5" r="2.7" fill="#0a4da2"/><circle cx="945.2" cy="362.3" r="2.7" fill="#0a4da2"/><circle cx="942.5" cy="362.6" r="2.7" fill="#0a4da2"/><circle cx="938.8" cy="361.9" r="2.7" fill="#0a4da2"/><circle cx="936.0" cy="362.3" r="2.7" fill="#0a4da2"/><circle cx="932.7" cy="361.8" r="2.7" fill="#0a4da2"/><circle cx="929.8" cy="361.4" r="2.7" fill="#0a4da2"/><circle cx="926.3" cy="361.8" r="2.7" fill="#0a4da2"/><circle cx="923.6" cy="361.8" r="2.7" fill="#0a4da2"/><circle cx="920.1" cy="361.4" r="2.7" fill="#0a4da2"/><circle cx="916.1" cy="361.0" r="2.7" fill="#0a4da2"/><circle cx="913.4" cy="361.3" r="2.7" fill="#0a4da2"/><circle cx="909.4" cy="360.5" r="2.7" fill="#0a4da2"/><circle cx="906.2" cy="361.0" r="2.7" fill="#0a4da2"/><circle cx="903.1" cy="360.4" r="2.7" fill="#0a4da2"/><circle cx="900.3" cy="360.9" r="2.7" fill="#0a4da2"/><circle cx="896.8" cy="359.8" r="2.7" fill="#0a4da2"/><circle cx="893.8" cy="360.1" r="2.7" fill="#0a4da2"/><circle cx="891.1" cy="359.7" r="2.7" fill="#0a4da2"/><circle cx="888.4" cy="360.1" r="2.7" fill="#0a4da2"/><circle cx="884.5" cy="359.0" r="2.7" fill="#0a4da2"/><circle cx="882.4" cy="359.1" r="2.7" fill="#0a4da2"/><circle cx="879.7" cy="356.9" r="2.7" fill="#0a4da2"/><circle cx="876.1" cy="355.1" r="2.7" fill="#0a4da2"/><circle cx="872.8" cy="353.9" r="2.7" fill="#0a4da2"/><circle cx="869.6" cy="351.8" r="2.7" fill="#0a4da2"/><circle cx="865.2" cy="350.5" r="2.7" fill="#0a4da2"/><circle cx="862.3" cy="351.0" r="2.7" fill="#0a4da2"/><circle cx="858.3" cy="350.5" r="2.7" fill="#0a4da2"/><circle cx="855.3" cy="351.1" r="2.7" fill="#0a4da2"/><circle cx="851.7" cy="349.7" r="2.7" fill="#0a4da2"/><circle cx="848.0" cy="349.5" r="2.7" fill="#0a4da2"/><circle cx="845.3" cy="349.5" r="2.7" fill="#0a4da2"/><circle cx="842.9" cy="349.8" r="2.7" fill="#0a4da2"/><polygon points="991.0,362.0 1010.0,362.5 1030.0,362.5 1051.0,362.5 1052.0,365.0 1030.0,366.0 1010.0,366.5 991.0,366.5" fill="#0a4da2"/><circle cx="991.4" cy="363.8" r="2.7" fill="#0a4da2"/><circle cx="993.8" cy="364.5" r="2.7" fill="#0a4da2"/><circle cx="997.5" cy="363.7" r="2.7" fill="#0a4da2"/><circle cx="1000.6" cy="364.1" r="2.7" fill="#0a4da2"/><circle cx="1003.5" cy="364.2" r="2.7" fill="#0a4da2"/><circle cx="1006.4" cy="363.9" r="2.7" fill="#0a4da2"/><circle cx="1009.8" cy="364.4" r="2.7" fill="#0a4da2"/><circle cx="1013.8" cy="364.1" r="2.7" fill="#0a4da2"/><circle cx="1017.1" cy="364.2" r="2.7" fill="#0a4da2"/><circle cx="1019.9" cy="364.8" r="2.7" fill="#0a4da2"/><circle cx="1023.7" cy="364.4" r="2.7" fill="#0a4da2"/><circle cx="1026.2" cy="364.5" r="2.7" fill="#0a4da2"/><circle cx="1029.9" cy="364.9" r="2.7" fill="#0a4da2"/><circle cx="1032.7" cy="364.4" r="2.7" fill="#0a4da2"/><circle cx="1036.4" cy="364.0" r="2.7" fill="#0a4da2"/><circle cx="1038.9" cy="364.8" r="2.7" fill="#0a4da2"/><circle cx="1042.3" cy="364.0" r="2.7" fill="#0a4da2"/><circle cx="1044.5" cy="364.1" r="2.7" fill="#0a4da2"/><circle cx="1048.4" cy="364.3" r="2.7" fill="#0a4da2"/><circle cx="1049.4" cy="363.6" r="2.7" fill="#0a4da2"/><circle cx="1051.7" cy="362.8" r="2.7" fill="#0a4da2"/><circle cx="1049.2" cy="363.3" r="2.7" fill="#0a4da2"/><circle cx="1045.4" cy="363.5" r="2.7" fill="#0a4da2"/><circle cx="1042.3" cy="363.2" r="2.7" fill="#0a4da2"/><circle cx="1038.8" cy="363.8" r="2.7" fill="#0a4da2"/><circle cx="1036.6" cy="363.9" r="2.7" fill="#0a4da2"/><circle cx="1033.5" cy="363.4" r="2.7" fill="#0a4da2"/><circle cx="1029.7" cy="364.0" r="2.7" fill="#0a4da2"/><circle cx="1027.1" cy="364.5" r="2.7" fill="#0a4da2"/><circle cx="1023.2" cy="363.9" r="2.7" fill="#0a4da2"/><circle cx="1019.9" cy="364.2" r="2.7" fill="#0a4da2"/><circle cx="1017.0" cy="364.0" r="2.7" fill="#0a4da2"/><circle cx="1013.6" cy="364.7" r="2.7" fill="#0a4da2"/><circle cx="1010.3" cy="364.8" r="2.7" fill="#0a4da2"/><circle cx="1006.9" cy="364.3" r="2.7" fill="#0a4da2"/><circle cx="1003.5" cy="364.4" r="2.7" fill="#0a4da2"/><circle cx="1000.8" cy="364.1" r="2.7" fill="#0a4da2"/><circle cx="997.0" cy="364.8" r="2.7" fill="#0a4da2"/><circle cx="993.9" cy="364.1" r="2.7" fill="#0a4da2"/><circle cx="992.5" cy="366.6" r="2.7" fill="#0a4da2"/><circle cx="876.6" cy="365.8" r="2.8" fill="#0a4da2"/><circle cx="882.7" cy="360.8" r="2.8" fill="#0a4da2"/><circle cx="877" cy="341.5" r="2.8" fill="#0a4da2"/><circle cx="881" cy="341" r="2.8" fill="#0a4da2"/><circle cx="972" cy="366" r="2.8" fill="#0a4da2"/><circle cx="981" cy="366.5" r="2.8" fill="#0a4da2"/><circle cx="986" cy="364.5" r="2.8" fill="#0a4da2"/><circle cx="951.8" cy="136.2" r="7" fill="#c5d3ea" fill-opacity="0.85" stroke="#a9bad6" stroke-width="1"/><ellipse cx="951.8" cy="136.2" rx="4.2" ry="2.8" fill="#0a4da2"/><path d="M902,150.5 H947 L951.8,146 L956.5,150.5 H1004.5 V211.5 H902 Z" fill="#000" fill-opacity="0.08" transform="translate(1,1.5)"/><path d="M902,150.5 H947 L951.8,146 L956.5,150.5 H1004.5 V211.5 H902 Z" fill="#f2f2f2" stroke="#c4c4c4" stroke-width="1"/><circle cx="913" cy="169.8" r="2.6" fill="#0a4da2"/><text x="921" y="172.6" font-size="8" fill="#555">Row 3308</text><text x="909" y="187.6" font-size="9.6" fill="#555">Prev Close = <tspan font-weight="bold" fill="#333">814.75</tspan></text><text x="909" y="200.6" font-size="9.6" fill="#555">Date = <tspan font-weight="bold" fill="#333">4/8/21</tspan></text></svg>
<div id="tbl" class="a"><div class="tc th" style="left:0px;top:1.0px;width:24px;height:18.0px;line-height:18.0px;"><svg width="6" height="7" viewBox="0 0 6 7" style="vertical-align:middle;position:relative;top:-1px"><path d="M2.2 0 H3.8 V3.5 H5.5 L3 7 L0.5 3.5 H2.2 Z" fill="#444"/></svg></div><div class="tc th" style="left:0px;top:19.0px;width:24px;height:18.0px;line-height:18.0px;"></div><div class="tc th" style="left:24px;top:1.0px;width:63px;height:18.0px;line-height:18.0px;">C1-D</div><div class="tc th" style="left:24px;top:19.0px;width:63px;height:18.0px;line-height:18.0px;">Date</div><div class="tc th" style="left:87px;top:1.0px;width:80px;height:18.0px;line-height:18.0px;">C2-T</div><div class="tc th" style="left:87px;top:19.0px;width:80px;height:18.0px;line-height:18.0px;">Symbol</div><div class="tc th" style="left:167px;top:1.0px;width:53px;height:18.0px;line-height:18.0px;">C3-T</div><div class="tc th" style="left:167px;top:19.0px;width:53px;height:18.0px;line-height:18.0px;">Series</div><div class="tc th" style="left:220px;top:1.0px;width:59px;height:18.0px;line-height:18.0px;">C4</div><div class="tc th" style="left:220px;top:19.0px;width:59px;height:18.0px;line-height:18.0px;">Prev Close</div><div class="tc th" style="left:279px;top:1.0px;width:52px;height:18.0px;line-height:18.0px;">C5</div><div class="tc th" style="left:279px;top:19.0px;width:52px;height:18.0px;line-height:18.0px;">Open</div><div class="tc th" style="left:331px;top:1.0px;width:53px;height:18.0px;line-height:18.0px;">C6</div><div class="tc th" style="left:331px;top:19.0px;width:53px;height:18.0px;line-height:18.0px;">High</div><div class="tc th" style="left:384px;top:1.0px;width:53px;height:18.0px;line-height:18.0px;">C7</div><div class="tc th" style="left:384px;top:19.0px;width:53px;height:18.0px;line-height:18.0px;">Low</div><div class="tc th" style="left:437px;top:1.0px;width:53px;height:18.0px;line-height:18.0px;">C8</div><div class="tc th" style="left:437px;top:19.0px;width:53px;height:18.0px;line-height:18.0px;">Last</div><div class="tc th" style="left:490px;top:1.0px;width:53px;height:18.0px;line-height:18.0px;">C9</div><div class="tc th" style="left:490px;top:19.0px;width:53px;height:18.0px;line-height:18.0px;">Close</div><div class="tc th" style="left:543px;top:1.0px;width:52px;height:18.0px;line-height:18.0px;">C10</div><div class="tc th" style="left:543px;top:19.0px;width:52px;height:18.0px;line-height:18.0px;">VWAP</div><div class="tc th" style="left:595px;top:1.0px;width:53px;height:18.0px;line-height:18.0px;">C11</div><div class="tc th" style="left:595px;top:19.0px;width:53px;height:18.0px;line-height:18.0px;">Volume</div><div class="tc th" style="left:648px;top:1.0px;width:69px;height:18.0px;line-height:18.0px;">C12</div><div class="tc th" style="left:648px;top:19.0px;width:69px;height:18.0px;line-height:18.0px;">Turnover</div><div class="tc th" style="left:717px;top:1.0px;width:52px;height:18.0px;line-height:18.0px;">C13</div><div class="tc th" style="left:717px;top:19.0px;width:52px;height:18.0px;line-height:18.0px;">Trades</div><div class="tc th" style="left:769px;top:1.0px;width:104px;height:18.0px;line-height:18.0px;">C14</div><div class="tc th" style="left:769px;top:19.0px;width:104px;height:18.0px;line-height:18.0px;">Deliverable Volume</div><div class="tc th" style="left:873px;top:1.0px;width:60px;height:18.0px;line-height:18.0px;"></div><div class="tc th" style="left:873px;top:19.0px;width:60px;height:18.0px;line-height:18.0px;">%Deliverble</div><div class="tc rh" style="left:0px;top:37.0px;width:24px;height:18.7px;line-height:18.7px;">1</div><div class="tc dt" style="left:24px;top:37.0px;width:63px;height:18.7px;line-height:18.7px;">2007-11-27</div><div class="tc tx" style="left:87px;top:37.0px;width:80px;height:18.7px;line-height:18.7px;">MUNDRAPORT</div><div class="tc tx" style="left:167px;top:37.0px;width:53px;height:18.7px;line-height:18.7px;">EQ</div><div class="tc num" style="left:220px;top:37.0px;width:59px;height:18.7px;line-height:18.7px;">440.00</div><div class="tc num" style="left:279px;top:37.0px;width:52px;height:18.7px;line-height:18.7px;">770.00</div><div class="tc num" style="left:331px;top:37.0px;width:53px;height:18.7px;line-height:18.7px;">1050.00</div><div class="tc num" style="left:384px;top:37.0px;width:53px;height:18.7px;line-height:18.7px;">770.00</div><div class="tc num" style="left:437px;top:37.0px;width:53px;height:18.7px;line-height:18.7px;">959.00</div><div class="tc num" style="left:490px;top:37.0px;width:53px;height:18.7px;line-height:18.7px;">962.90</div><div class="tc num" style="left:543px;top:37.0px;width:52px;height:18.7px;line-height:18.7px;">984.72</div><div class="tc num" style="left:595px;top:37.0px;width:53px;height:18.7px;line-height:18.7px;">27294366</div><div class="tc num" style="left:648px;top:37.0px;width:69px;height:18.7px;line-height:18.7px;">2.68772E+15</div><div class="tc num star" style="left:717px;top:37.0px;width:52px;height:18.7px;line-height:18.7px;"><span style="color:#999;font-size:8px;position:relative;top:-2px">*</span></div><div class="tc num" style="left:769px;top:37.0px;width:104px;height:18.7px;line-height:18.7px;">9859619</div><div class="tc num" style="left:873px;top:37.0px;width:60px;height:18.7px;line-height:18.7px;"></div><div class="tc rh" style="left:0px;top:55.7px;width:24px;height:18.7px;line-height:18.7px;">2</div><div class="tc dt" style="left:24px;top:55.7px;width:63px;height:18.7px;line-height:18.7px;">2007-11-28</div><div class="tc tx" style="left:87px;top:55.7px;width:80px;height:18.7px;line-height:18.7px;">MUNDRAPORT</div><div class="tc tx" style="left:167px;top:55.7px;width:53px;height:18.7px;line-height:18.7px;">EQ</div><div class="tc num" style="left:220px;top:55.7px;width:59px;height:18.7px;line-height:18.7px;">962.90</div><div class="tc num" style="left:279px;top:55.7px;width:52px;height:18.7px;line-height:18.7px;">984.00</div><div class="tc num" style="left:331px;top:55.7px;width:53px;height:18.7px;line-height:18.7px;">990.00</div><div class="tc num" style="left:384px;top:55.7px;width:53px;height:18.7px;line-height:18.7px;">874.00</div><div class="tc num" style="left:437px;top:55.7px;width:53px;height:18.7px;line-height:18.7px;">885.00</div><div class="tc num" style="left:490px;top:55.7px;width:53px;height:18.7px;line-height:18.7px;">893.90</div><div class="tc num" style="left:543px;top:55.7px;width:52px;height:18.7px;line-height:18.7px;">941.38</div><div class="tc num" style="left:595px;top:55.7px;width:53px;height:18.7px;line-height:18.7px;">4581338</div><div class="tc num" style="left:648px;top:55.7px;width:69px;height:18.7px;line-height:18.7px;">4.31277E+14</div><div class="tc num star" style="left:717px;top:55.7px;width:52px;height:18.7px;line-height:18.7px;"><span style="color:#999;font-size:8px;position:relative;top:-2px">*</span></div><div class="tc num" style="left:769px;top:55.7px;width:104px;height:18.7px;line-height:18.7px;">1453278</div><div class="tc num" style="left:873px;top:55.7px;width:60px;height:18.7px;line-height:18.7px;"></div><div class="tc rh" style="left:0px;top:74.3px;width:24px;height:18.7px;line-height:18.7px;">3</div><div class="tc dt" style="left:24px;top:74.3px;width:63px;height:18.7px;line-height:18.7px;">2007-11-29</div><div class="tc tx" style="left:87px;top:74.3px;width:80px;height:18.7px;line-height:18.7px;">MUNDRAPORT</div><div class="tc tx" style="left:167px;top:74.3px;width:53px;height:18.7px;line-height:18.7px;">EQ</div><div class="tc num" style="left:220px;top:74.3px;width:59px;height:18.7px;line-height:18.7px;">893.90</div><div class="tc num" style="left:279px;top:74.3px;width:52px;height:18.7px;line-height:18.7px;">909.00</div><div class="tc num" style="left:331px;top:74.3px;width:53px;height:18.7px;line-height:18.7px;">914.75</div><div class="tc num" style="left:384px;top:74.3px;width:53px;height:18.7px;line-height:18.7px;">841.00</div><div class="tc num" style="left:437px;top:74.3px;width:53px;height:18.7px;line-height:18.7px;">887.00</div><div class="tc num" style="left:490px;top:74.3px;width:53px;height:18.7px;line-height:18.7px;">884.20</div><div class="tc num" style="left:543px;top:74.3px;width:52px;height:18.7px;line-height:18.7px;">888.09</div><div class="tc num" style="left:595px;top:74.3px;width:53px;height:18.7px;line-height:18.7px;">5124121</div><div class="tc num" style="left:648px;top:74.3px;width:69px;height:18.7px;line-height:18.7px;">4.55066E+14</div><div class="tc num star" style="left:717px;top:74.3px;width:52px;height:18.7px;line-height:18.7px;"><span style="color:#999;font-size:8px;position:relative;top:-2px">*</span></div><div class="tc num" style="left:769px;top:74.3px;width:104px;height:18.7px;line-height:18.7px;">1069678</div><div class="tc num" style="left:873px;top:74.3px;width:60px;height:18.7px;line-height:18.7px;"></div><div class="tc rh" style="left:0px;top:93.0px;width:24px;height:18.7px;line-height:18.7px;">4</div><div class="tc dt" style="left:24px;top:93.0px;width:63px;height:18.7px;line-height:18.7px;">2007-11-30</div><div class="tc tx" style="left:87px;top:93.0px;width:80px;height:18.7px;line-height:18.7px;">MUNDRAPORT</div><div class="tc tx" style="left:167px;top:93.0px;width:53px;height:18.7px;line-height:18.7px;">EQ</div><div class="tc num" style="left:220px;top:93.0px;width:59px;height:18.7px;line-height:18.7px;">884.20</div><div class="tc num" style="left:279px;top:93.0px;width:52px;height:18.7px;line-height:18.7px;">890.00</div><div class="tc num" style="left:331px;top:93.0px;width:53px;height:18.7px;line-height:18.7px;">958.00</div><div class="tc num" style="left:384px;top:93.0px;width:53px;height:18.7px;line-height:18.7px;">890.00</div><div class="tc num" style="left:437px;top:93.0px;width:53px;height:18.7px;line-height:18.7px;">929.00</div><div class="tc num" style="left:490px;top:93.0px;width:53px;height:18.7px;line-height:18.7px;">921.55</div><div class="tc num" style="left:543px;top:93.0px;width:52px;height:18.7px;line-height:18.7px;">929.17</div><div class="tc num" style="left:595px;top:93.0px;width:53px;height:18.7px;line-height:18.7px;">4609762</div><div class="tc num" style="left:648px;top:93.0px;width:69px;height:18.7px;line-height:18.7px;">4.28326E+14</div><div class="tc num star" style="left:717px;top:93.0px;width:52px;height:18.7px;line-height:18.7px;"><span style="color:#999;font-size:8px;position:relative;top:-2px">*</span></div><div class="tc num" style="left:769px;top:93.0px;width:104px;height:18.7px;line-height:18.7px;">1260913</div><div class="tc num" style="left:873px;top:93.0px;width:60px;height:18.7px;line-height:18.7px;"></div><div class="tc rh" style="left:0px;top:111.7px;width:24px;height:18.7px;line-height:18.7px;">5</div><div class="tc dt" style="left:24px;top:111.7px;width:63px;height:18.7px;line-height:18.7px;">2007-12-03</div><div class="tc tx" style="left:87px;top:111.7px;width:80px;height:18.7px;line-height:18.7px;">MUNDRAPORT</div><div class="tc tx" style="left:167px;top:111.7px;width:53px;height:18.7px;line-height:18.7px;">EQ</div><div class="tc num" style="left:220px;top:111.7px;width:59px;height:18.7px;line-height:18.7px;">921.55</div><div class="tc num" style="left:279px;top:111.7px;width:52px;height:18.7px;line-height:18.7px;">939.75</div><div class="tc num" style="left:331px;top:111.7px;width:53px;height:18.7px;line-height:18.7px;">995.00</div><div class="tc num" style="left:384px;top:111.7px;width:53px;height:18.7px;line-height:18.7px;">922.00</div><div class="tc num" style="left:437px;top:111.7px;width:53px;height:18.7px;line-height:18.7px;">980.00</div><div class="tc num" style="left:490px;top:111.7px;width:53px;height:18.7px;line-height:18.7px;">969.30</div><div class="tc num" style="left:543px;top:111.7px;width:52px;height:18.7px;line-height:18.7px;">965.65</div><div class="tc num" style="left:595px;top:111.7px;width:53px;height:18.7px;line-height:18.7px;">2977470</div><div class="tc num" style="left:648px;top:111.7px;width:69px;height:18.7px;line-height:18.7px;">2.87520E+14</div><div class="tc num star" style="left:717px;top:111.7px;width:52px;height:18.7px;line-height:18.7px;"><span style="color:#999;font-size:8px;position:relative;top:-2px">*</span></div><div class="tc num" style="left:769px;top:111.7px;width:104px;height:18.7px;line-height:18.7px;">816123</div><div class="tc num" style="left:873px;top:111.7px;width:60px;height:18.7px;line-height:18.7px;"></div><div class="tc rh" style="left:0px;top:130.4px;width:24px;height:18.7px;line-height:18.7px;">6</div><div class="tc dt" style="left:24px;top:130.4px;width:63px;height:18.7px;line-height:18.7px;">2007-12-04</div><div class="tc tx" style="left:87px;top:130.4px;width:80px;height:18.7px;line-height:18.7px;">MUNDRAPORT</div><div class="tc tx" style="left:167px;top:130.4px;width:53px;height:18.7px;line-height:18.7px;">EQ</div><div class="tc num" style="left:220px;top:130.4px;width:59px;height:18.7px;line-height:18.7px;">969.30</div><div class="tc num" style="left:279px;top:130.4px;width:52px;height:18.7px;line-height:18.7px;">985.00</div><div class="tc num" style="left:331px;top:130.4px;width:53px;height:18.7px;line-height:18.7px;">1056.00</div><div class="tc num" style="left:384px;top:130.4px;width:53px;height:18.7px;line-height:18.7px;">976.00</div><div class="tc num" style="left:437px;top:130.4px;width:53px;height:18.7px;line-height:18.7px;">1049.00</div><div class="tc num" style="left:490px;top:130.4px;width:53px;height:18.7px;line-height:18.7px;">1041.45</div><div class="tc num" style="left:543px;top:130.4px;width:52px;height:18.7px;line-height:18.7px;">1015.39</div><div class="tc num" style="left:595px;top:130.4px;width:53px;height:18.7px;line-height:18.7px;">4849250</div><div class="tc num" style="left:648px;top:130.4px;width:69px;height:18.7px;line-height:18.7px;">4.92387E+14</div><div class="tc num star" style="left:717px;top:130.4px;width:52px;height:18.7px;line-height:18.7px;"><span style="color:#999;font-size:8px;position:relative;top:-2px">*</span></div><div class="tc num" style="left:769px;top:130.4px;width:104px;height:18.7px;line-height:18.7px;">1537667</div><div class="tc num" style="left:873px;top:130.4px;width:60px;height:18.7px;line-height:18.7px;"></div><div class="tc rh" style="left:0px;top:149.0px;width:24px;height:18.7px;line-height:18.7px;">7</div><div class="tc dt" style="left:24px;top:149.0px;width:63px;height:18.7px;line-height:18.7px;">2007-12-05</div><div class="tc tx" style="left:87px;top:149.0px;width:80px;height:18.7px;line-height:18.7px;">MUNDRAPORT</div><div class="tc tx" style="left:167px;top:149.0px;width:53px;height:18.7px;line-height:18.7px;">EQ</div><div class="tc num" style="left:220px;top:149.0px;width:59px;height:18.7px;line-height:18.7px;">1041.45</div><div class="tc num" style="left:279px;top:149.0px;width:52px;height:18.7px;line-height:18.7px;">1061.00</div><div class="tc num" style="left:331px;top:149.0px;width:53px;height:18.7px;line-height:18.7px;">1099.50</div><div class="tc num" style="left:384px;top:149.0px;width:53px;height:18.7px;line-height:18.7px;">1050.00</div><div class="tc num" style="left:437px;top:149.0px;width:53px;height:18.7px;line-height:18.7px;">1084.00</div><div class="tc num" style="left:490px;top:149.0px;width:53px;height:18.7px;line-height:18.7px;">1082.45</div><div class="tc num" style="left:543px;top:149.0px;width:52px;height:18.7px;line-height:18.7px;">1082.79</div><div class="tc num" style="left:595px;top:149.0px;width:53px;height:18.7px;line-height:18.7px;">2848209</div><div class="tc num" style="left:648px;top:149.0px;width:69px;height:18.7px;line-height:18.7px;">3.08401E+14</div><div class="tc num star" style="left:717px;top:149.0px;width:52px;height:18.7px;line-height:18.7px;"><span style="color:#999;font-size:8px;position:relative;top:-2px">*</span></div><div class="tc num" style="left:769px;top:149.0px;width:104px;height:18.7px;line-height:18.7px;">904260</div><div class="tc num" style="left:873px;top:149.0px;width:60px;height:18.7px;line-height:18.7px;"></div><div class="tc rh" style="left:0px;top:167.7px;width:24px;height:18.7px;line-height:18.7px;">8</div><div class="tc dt" style="left:24px;top:167.7px;width:63px;height:18.7px;line-height:18.7px;">2007-12-06</div><div class="tc tx" style="left:87px;top:167.7px;width:80px;height:18.7px;line-height:18.7px;">MUNDRAPORT</div><div class="tc tx" style="left:167px;top:167.7px;width:53px;height:18.7px;line-height:18.7px;">EQ</div><div class="tc num" style="left:220px;top:167.7px;width:59px;height:18.7px;line-height:18.7px;">1082.45</div><div class="tc num" style="left:279px;top:167.7px;width:52px;height:18.7px;line-height:18.7px;">1089.00</div><div class="tc num" style="left:331px;top:167.7px;width:53px;height:18.7px;line-height:18.7px;">1109.70</div><div class="tc num" style="left:384px;top:167.7px;width:53px;height:18.7px;line-height:18.7px;">1051.00</div><div class="tc num" style="left:437px;top:167.7px;width:53px;height:18.7px;line-height:18.7px;">1090.10</div><div class="tc num" style="left:490px;top:167.7px;width:53px;height:18.7px;line-height:18.7px;">1081.30</div><div class="tc num" style="left:543px;top:167.7px;width:52px;height:18.7px;line-height:18.7px;">1087.03</div><div class="tc num" style="left:595px;top:167.7px;width:53px;height:18.7px;line-height:18.7px;">1749516</div><div class="tc num" style="left:648px;top:167.7px;width:69px;height:18.7px;line-height:18.7px;">1.90177E+14</div><div class="tc num star" style="left:717px;top:167.7px;width:52px;height:18.7px;line-height:18.7px;"><span style="color:#999;font-size:8px;position:relative;top:-2px">*</span></div><div class="tc num" style="left:769px;top:167.7px;width:104px;height:18.7px;line-height:18.7px;">825691</div><div class="tc num" style="left:873px;top:167.7px;width:60px;height:18.7px;line-height:18.7px;"></div><div class="a" style="left:890px;top:0;width:16px;height:183px;background:#fff;"></div><div class="a" style="left:891px;top:1px;width:14px;height:14px;background:#fff;border:1px solid #e8e8e8;box-sizing:border-box;"></div><svg class="a" style="left:894px;top:5px" width="8" height="5" viewBox="0 0 8 5"><path d="M0 5 L4 0.5 L8 5 Z" fill="#666"/></svg><div class="a" style="left:891px;top:28px;width:14px;height:145px;background:#e6e6e6;"></div><svg class="a" style="left:894px;top:175px" width="8" height="5" viewBox="0 0 8 5"><path d="M0 0 L4 4.5 L8 0 Z" fill="#666"/></svg></div>
<div id="bottom" class="a"><div class="btn" style="left:15px;top:17px;width:82px;">Help</div><div class="btn" style="left:104px;top:17px;width:82px;">Reset</div><div class="btn pri" style="left:720px;top:17px;width:82px;">Create</div><div class="btn" style="left:809px;top:17px;width:82px;">Cancel</div></div>
</body></html>
